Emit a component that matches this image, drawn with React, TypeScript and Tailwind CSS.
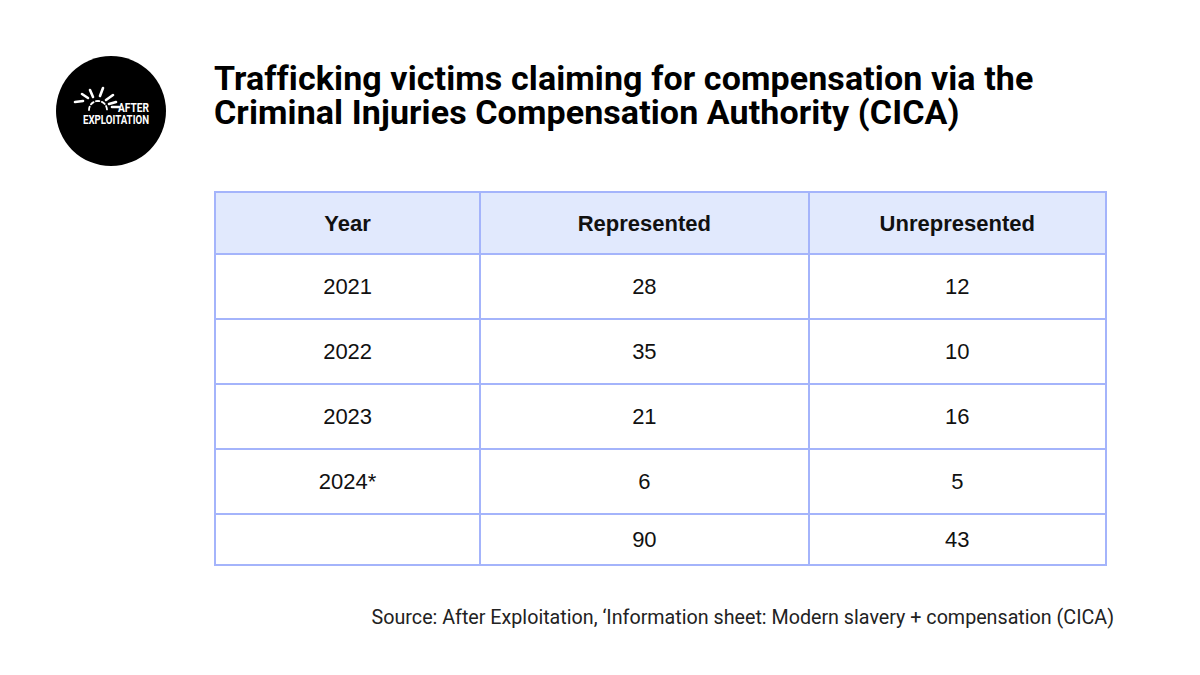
import React from "react";

const rows = [
  { year: "2021", rep: "28", unrep: "12" },
  { year: "2022", rep: "35", unrep: "10" },
  { year: "2023", rep: "21", unrep: "16" },
  { year: "2024*", rep: "6", unrep: "5" },
];

function Logo() {
  // coordinates relative to the circle's box (56,56)
  return (
    <svg width="110" height="110" viewBox="0 0 110 110" className="shrink-0">
      <circle cx="55" cy="55" r="55" fill="#000" />
      <g stroke="#fff" strokeWidth="2.6" strokeLinecap="round" fill="none">
        <line x1="19" y1="46" x2="27" y2="45" />
        <line x1="26" y1="38" x2="32" y2="42" />
        <line x1="34" y1="34" x2="37" y2="41" />
        <line x1="47" y1="32" x2="44" y2="40" />
        <line x1="57" y1="39" x2="50" y2="44" />
        <line x1="60" y1="46" x2="53" y2="48" />
        <line x1="56" y1="51" x2="63" y2="51" />
        <path d="M33 54 A9 9 0 0 1 51 54" strokeDasharray="3.5 2.5" strokeWidth="1.8" />
      </g>
      <text x="62" y="56" fill="#fff" fontFamily="'Liberation Sans Narrow','Roboto',sans-serif" fontSize="12" fontWeight="700" textLength="31" lengthAdjust="spacingAndGlyphs">AFTER</text>
      <text x="27" y="68" fill="#fff" fontFamily="'Liberation Sans Narrow','Roboto',sans-serif" fontSize="12" fontWeight="700" textLength="66" lengthAdjust="spacingAndGlyphs">EXPLOITATION</text>
    </svg>
  );
}

export default function App() {
  return (
    <div className="w-[1200px] h-[675px] bg-white relative overflow-hidden" style={{ fontFamily: "Roboto, 'Liberation Sans', sans-serif" }}>
      <div className="flex gap-12 pl-[56px] pt-[56px]">
        <Logo />
        <h1 className="pt-[5px] text-[34px] leading-[34px] font-bold tracking-[0.1px] text-black">
          Trafficking victims claiming for compensation via the
          <br />
          Criminal Injuries Compensation Authority (CICA)
        </h1>
      </div>

      <div className="pl-[214px] pt-[25px]">
        <table className="w-[893px] border-collapse text-[22px] text-[#111]" style={{ fontFamily: "'Liberation Sans', Arial, sans-serif" }}>
          <colgroup>
            <col className="w-[266px]" />
            <col className="w-[329px]" />
            <col className="w-[298px]" />
          </colgroup>
          <thead>
            <tr className="h-[62px] bg-[#e1e9fd]">
              <th className="border-2 border-[#a4b4fb] font-bold">Year</th>
              <th className="border-2 border-[#a4b4fb] font-bold">Represented</th>
              <th className="border-2 border-[#a4b4fb] font-bold">Unrepresented</th>
            </tr>
          </thead>
          <tbody>
            {rows.map((r) => (
              <tr key={r.year} className="h-[65px]">
                <td className="border-2 border-[#a4b4fb] text-center">{r.year}</td>
                <td className="border-2 border-[#a4b4fb] text-center">{r.rep}</td>
                <td className="border-2 border-[#a4b4fb] text-center">{r.unrep}</td>
              </tr>
            ))}
            <tr className="h-[51px]">
              <td className="border-2 border-[#a4b4fb]"></td>
              <td className="border-2 border-[#a4b4fb] text-center">90</td>
              <td className="border-2 border-[#a4b4fb] text-center">43</td>
            </tr>
          </tbody>
        </table>
      </div>

      <p className="absolute right-[86px] top-[603px] text-[19.7px] text-[#222]">
        Source: After Exploitation, ‘Information sheet: Modern slavery + compensation (CICA)
      </p>
    </div>
  );
}
